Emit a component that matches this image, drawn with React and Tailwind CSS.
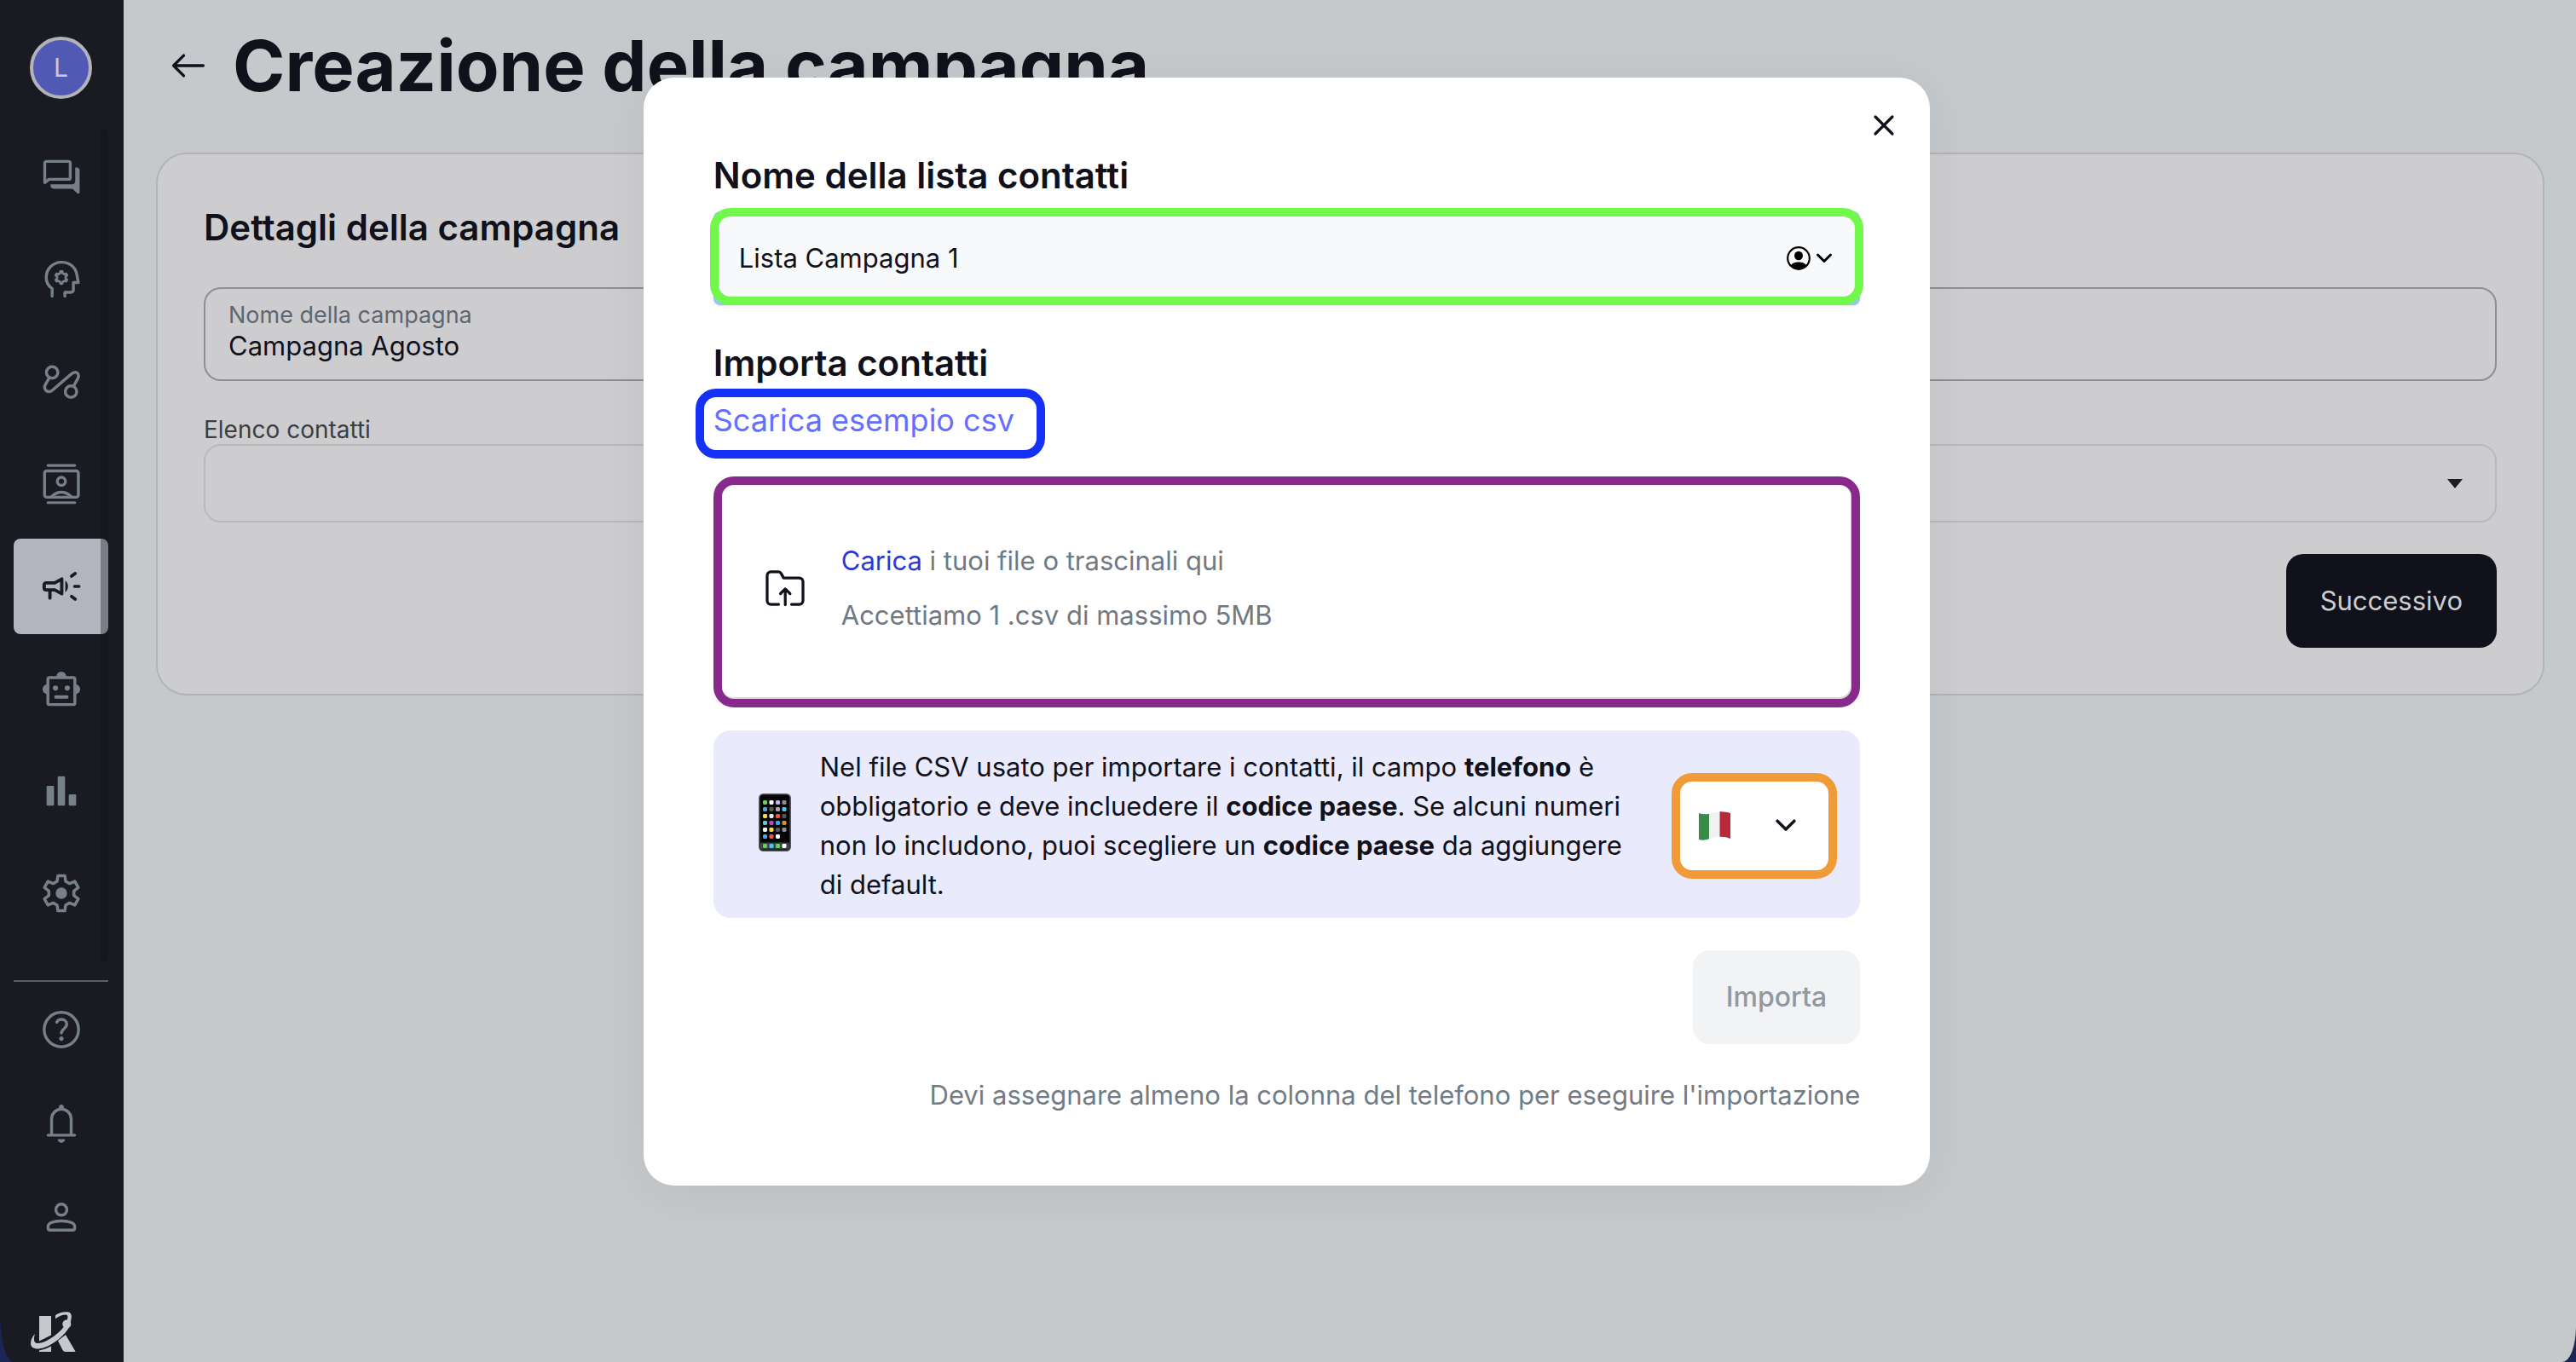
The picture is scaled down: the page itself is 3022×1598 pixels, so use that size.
import React from "react";

const Icon = ({ children, className = "size-[52px]" }) => (
  <svg viewBox="0 0 24 24" fill="none" stroke="currentColor" strokeWidth="1.6" strokeLinecap="round" strokeLinejoin="round" className={className} aria-hidden="true">
    {children}
  </svg>
);

const gearPoints = (cx, cy, outer, inner, halfOuter, halfInner) =>
  Array.from({ length: 6 }, (_, k) => {
    const a = (k * Math.PI) / 3;
    return [[-halfInner, -inner], [-halfOuter, -outer], [halfOuter, -outer], [halfInner, -inner]]
      .map(([x, y]) => `${(cx + x * Math.cos(a) - y * Math.sin(a)).toFixed(2)},${(cy + x * Math.sin(a) + y * Math.cos(a)).toFixed(2)}`)
      .join(" ");
  }).join(" ");

const mainNav = [
  { name: "Conversazioni", icon: (
    <>
      <path d="M3 14.9V4.3a.9.9 0 0 1 .9-.9h12a.9.9 0 0 1 .9.9v7.9a.9.9 0 0 1-.9.9H5.3z" />
      <path stroke="none" fill="currentColor" d="M6.2 15.8h11.5c1.2 0 1.8-.6 1.8-1.8V6.7h.8c.9 0 1.6.7 1.6 1.6v11.8c0 .7-.8 1-1.3.5l-2.6-2.4H8c-1.3 0-2.2-1-1.8-2.4z" />
    </>
  ) },
  { name: "Intelligenza artificiale", icon: (
    <>
      <path d="M7 21v-4.1C4.7 15.3 3.8 13 3.8 10.8c0-4.6 3.7-8.2 8.200-8.200 4.300 0 7.500 2.500 8.300 6.400l.9 4.600h-2.700v4a1.300 1.300 0 0 1-1.300 1.300h-3.300V21" />
      <polygon strokeWidth="1.3" points={gearPoints(12, 10.9, 3.3, 2.3, 0.5, 0.7)} />
    </>
  ) },
  { name: "Flussi", icon: (
    <>
      <circle cx="7" cy="6.9" r="3.1" />
      <circle cx="17.2" cy="17.3" r="3.1" />
      <path d="M5.5 9.8 3.3 13.6c-1 1.7.2 3.7 2 3.7.7 0 1.3-.2 1.9-.8l10-8.600c.8-.7 1.500-1.100 2.300-1.100 1.600 0 2.300 1.900 1.400 3.400l-2.200 4" />
    </>
  ) },
  { name: "Contatti", icon: (
    <>
      <path strokeWidth="1.4" d="M4.7 1.9h14.6M4.7 22h14.6" />
      <rect x="2.9" y="4.8" width="18.3" height="14.3" rx="1.2" />
      <circle cx="12" cy="10.5" r="2.2" />
      <path d="M6.8 18.7c1.6-1.5 3.4-2.3 5.2-2.3s3.6.8 5.2 2.3" />
    </>
  ) },
  { name: "Campagne", active: true, icon: (
    <>
      <path strokeWidth="1.8" d="M3.7 10.1h4.7l3.8-2.1v8l-3.8-2.1H3.7a1 1 0 0 1-1-1v-1.8a1 1 0 0 1 1-1zM5.8 14v4.3" />
      <path stroke="none" fill="currentColor" d="M14.1 8.9c.9.7 1.5 1.8 1.5 3.1s-.6 2.5-1.5 3.2z" />
      <path strokeWidth="1.7" d="M19.2 12h2.3M17.5 6.5l2-1.5M17.5 17.4l2 1.5" />
    </>
  ) },
  { name: "Bot", icon: (
    <>
      <rect x="4.7" y="6" width="14.6" height="14.6" rx=".9" />
      <path stroke="none" fill="currentColor" d="M9.3 5.5a2.7 2.7 0 0 1 5.4 0zM4.5 9.6a2.7 2.7 0 0 0 0 5.4zM19.5 9.6a2.7 2.7 0 0 1 0 5.4z" />
      <circle cx="8.8" cy="11.7" r="1.4" stroke="none" fill="currentColor" />
      <circle cx="15.2" cy="11.7" r="1.4" stroke="none" fill="currentColor" />
      <path strokeWidth="1.8" d="M9 16.5h6" />
    </>
  ) },
  { name: "Statistiche", icon: (
    <g stroke="none" fill="currentColor">
      <rect x="4" y="9.2" width="4" height="10.8" rx=".6" />
      <rect x="10" y="4" width="4" height="16" rx=".6" />
      <rect x="16" y="13.8" width="4" height="6.2" rx=".6" />
    </g>
  ) },
  { name: "Impostazioni", icon: (
    <>
      <polygon points={gearPoints(12, 12, 9.5, 6.5, 1.9, 2.3)} />
      <circle cx="12" cy="12" r="3.1" stroke="none" fill="currentColor" />
    </>
  ) },
];

const footNav = [
  { name: "Aiuto", icon: (
    <>
      <circle cx="12" cy="12" r="9.3" />
      <path d="M9.5 8c.5-.9 1.4-1.5 2.5-1.5 1.7 0 2.9 1.1 2.9 2.6 0 2.2-2.9 2.6-2.9 4.800" />
      <circle cx="12" cy="16.9" r="1.2" stroke="none" fill="currentColor" />
    </>
  ) },
  { name: "Notifiche", icon: (
    <>
      <path d="M4.8 18.4h14.4M6.7 18.4V9.6a5.3 5.3 0 0 1 10.6 0v8.8" />
      <path stroke="none" fill="currentColor" d="M10.7 3.2a1.3 1.3 0 0 1 2.6 0v1.2h-2.6zM10 20.500h4a2 2 0 0 1-4 0z" />
    </>
  ) },
  { name: "Profilo", icon: (
    <>
      <circle cx="12" cy="8" r="3" />
      <path d="M4.8 18v-.9c0-1 .5-1.6 1.4-2 1.9-.7 3.8-1 5.8-1s3.9.3 5.8 1c.9.4 1.4 1 1.4 2v.9c0 .6-.4 1-1 1H5.8c-.6 0-1-.4-1-1z" />
    </>
  ) },
];

const NavButton = ({ item }) => (
  <button
    type="button"
    aria-label={item.name}
    className={item.active
      ? "flex h-28 w-full items-center justify-center rounded-lg bg-[#b2b5be] text-[#191a22]"
      : "flex h-28 w-full items-center justify-center rounded-lg text-[#777f87]"}
  >
    <Icon>{item.icon}</Icon>
  </button>
);

const Logo = () => (
  <svg viewBox="0 0 54 48" className="h-12 w-[54px]" fill="#c5c9cc" aria-hidden="true">
    <path d="M10 5h14v22.500L10 34.500zM24 40.500V47H10v-1.500c5-1 10-2.800 14-5zM32 34l9-7 11.700 20H41c-2 0-3-1-4-3z" />
    <path d="M29 4.300C32 1.500 38 0 43 .2c4.500.3 5.500 4 4.500 8.500l-2 9C40 27 28 38 16 42 7 45 0 43.500 0 37c0-4 2-8 5-11-1.500 5-2 11 3 11 11 0 29-14 33-23 2.500-5.500 4-10.500 0-10.500-4 0-8 2-12 4.800z" />
    <circle cx="42.300" cy="14.500" r="5" />
  </svg>
);

const Sidebar = () => (
  <aside className="flex w-[145px] shrink-0 flex-col bg-[#191a22] pt-[43px] pr-[18px] pl-4">
    <div className="flex size-[73px] items-center justify-center self-center rounded-full border-4 border-[#b2b3ba] bg-[#505ab5] text-[30px] text-[#c9cbd6]">L</div>
    <nav className="relative mt-9 flex flex-col gap-2">
      {mainNav.map((item) => <NavButton key={item.name} item={item} />)}
      <div className="absolute top-0 right-0 -bottom-6 w-[9px] rounded-lg bg-[#14151c]/35" />
    </nav>
    <hr className="mt-[46px] border-t-2 border-[#5a6069]" />
    <nav className="flex flex-col">
      {footNav.map((item) => (
        <div key={item.name} className="h-[110px]"><NavButton item={item} /></div>
      ))}
    </nav>
    <div className="mt-[57px] ml-5"><Logo /></div>
  </aside>
);

const Page = () => (
  <main className="min-w-0 flex-1 bg-[#c5c9cc] pr-[37px] pl-[38px]">
    <header className="flex h-[179px] items-start gap-7 pt-[29px] pl-[14px]">
      <button type="button" aria-label="Indietro" className="flex h-24 w-12 items-center justify-center text-[#10111a]">
        <Icon className="size-11"><path strokeWidth="1.800" d="M21.500 12H3M9 5.500 2.500 12 9 18.500" /></Icon>
      </button>
      <h1 className="text-[83px] leading-[96px] font-bold whitespace-nowrap">Creazione della campagna</h1>
    </header>
    <section className="rounded-[36px] border-2 border-[#b0b4b9] bg-[#cdcdcf] px-[54px] pt-14 pb-[54px]">
      <h2 className="text-[42px] leading-[60px] font-semibold">Dettagli della campagna</h2>
      <label className="mt-10 flex h-[110px] flex-col justify-center rounded-[20px] border-2 border-[#8b9098] px-[27px] pb-2">
        <span className="text-[27px] leading-9 text-[#5f6670]">Nome della campagna</span>
        <input defaultValue="Campagna Agosto" className="w-full text-[31px] leading-9 outline-none" />
      </label>
      <label className="mt-10 block text-[28px] leading-[34px] text-[#3b3d42]" htmlFor="elenco">Elenco contatti</label>
      <div className="relative">
        <select id="elenco" className="block h-[92px] w-full appearance-none rounded-[20px] border-2 border-[#b7b9bc] px-7" defaultValue="">
          <option value=""></option>
        </select>
        <svg viewBox="0 0 18 11" className="pointer-events-none absolute top-[41px] right-10 h-[11px] w-[18px]" fill="#1b1c24" aria-hidden="true"><path d="M0 0h18L9 11z" /></svg>
      </div>
      <div className="mt-[37px] flex justify-end">
        <button type="button" className="h-[110px] rounded-[20px] bg-[#10111a] px-10 text-[31px] text-[#cdcdcf]">Successivo</button>
      </div>
    </section>
  </main>
);

const phoneRows = [
  ["#5fd35a", "#ffffff", "#c9b0ee", "#8d8d92"],
  ["#3fa9f5", "#5a5a5e", "#a9a9a9", "#4cc3f0"],
  ["#ffd83b", "#e9e9e9", "#f0554a", "#55555a"],
  ["#5bc8e8", "#d03fc0", "#3f9ff0", "#e08a24"],
  ["#f5f5f5", "#ffd83b", "#55555a", "#8d8d92"],
  ["#3fa9f5", "#f0554a", "#ffffff"],
];

const Phone = () => (
  <svg viewBox="0 0 38 68" className="mb-2 h-[68px] w-[38px] shrink-0" aria-hidden="true">
    <rect x=".8" y=".8" width="36.4" height="66.4" rx="4.5" fill="#050506" stroke="#55585c" strokeWidth="1.6" />
    <rect x="2" y="57.5" width="34" height="8" rx="2" fill="#3d4446" />
    {phoneRows.map((row, r) => row.map((c, i) => <rect key={`${r}-${i}`} x={5 + i * 7.5} y={8 + r * 8} width="5" height="5" rx="1.4" fill={c} />))}
    {["#5fd35a", "#4cc3f0", "#5fd35a", "#ffffff"].map((c, i) => <rect key={i} x={5 + i * 7.5} y="59" width="5" height="5" rx="1.4" fill={c} />)}
  </svg>
);

const Flag = () => (
  <svg viewBox="0 0 37 35" className="h-[35px] w-[37px]" aria-hidden="true">
    <path d="M0 2c4 1.500 8 1.700 12 .8v29.500c-4 1.500-8 1.800-12 .7z" fill="#388a48" />
    <path d="M12 2.800C16.500 1.800 20 .3 24.500.2v29.600c-4.500.2-8 1.700-12.500 2.500z" fill="#f1f1f2" />
    <path d="M24.500.2C29 0 33 .8 37 2v30c-4-1.500-8-2.400-12.500-2.200z" fill="#b72a37" />
  </svg>
);

const Modal = () => (
  <div role="dialog" aria-modal="true" aria-label="Importa contatti" className="relative w-1/2 rounded-[36px] bg-white px-[82px] pt-[85px] pb-[82px] shadow-[0_8px_60px_rgba(0,0,0,0.06)]">
    <button type="button" aria-label="Chiudi" className="absolute top-8 right-[30px] flex size-12 items-center justify-center">
      <Icon className="size-8"><path strokeWidth="2.4" d="M4.500 4.500l15 15M19.500 4.500l-15 15" /></Icon>
    </button>

    <label htmlFor="lista" className="block text-[42px] leading-[60px] font-semibold">Nome della lista contatti</label>
    <div className="relative mt-3 flex h-[110px] items-center gap-1 rounded-lg bg-[#93c5fd] px-[30px] shadow-sm">
      <div className="absolute -inset-x-1 -top-1 bottom-0 rounded-3xl border-10 border-[#72f84b] bg-[#f8f9fb]" />
      <input id="lista" defaultValue="Lista Campagna 1" className="relative min-w-0 flex-1 text-[31px] leading-10 outline-none" />
      <button type="button" aria-label="Scegli lista" className="relative flex items-center gap-1 text-black">
        <svg viewBox="0 0 28 28" className="size-7" aria-hidden="true">
          <circle cx="14" cy="14" r="12.8" fill="none" stroke="currentColor" strokeWidth="2.2" />
          <ellipse cx="14" cy="11" rx="5" ry="5.3" fill="currentColor" />
          <path d="M5 22.500c1-2.700 5-4 9-4s8 1.300 9 4c-2.300 2.900-5.500 4.500-9 4.500s-6.700-1.600-9-4.500z" fill="currentColor" />
        </svg>
        <Icon className="size-6"><path strokeWidth="3" d="M4.500 8l7.500 7.500L19.500 8" /></Icon>
      </button>
    </div>

    <h3 className="mt-[38px] text-[42px] leading-[60px] font-semibold">Importa contatti</h3>
    <a href="#csv" className="-ml-[21px] block w-fit rounded-3xl border-10 border-[#1431f8] pr-[26px] pb-2 pl-[11px] text-[36px] leading-[54px] text-[#656fff]">Scarica esempio csv</a>

    <div className="mt-[21px] flex h-[271px] items-center gap-10 rounded-3xl border-10 border-[#882a8c] px-12 pb-[10px] text-[31px] leading-[64px] text-[#707982] shadow-[inset_-1px_-2px_0_#d5d7da]">
      <Icon className="size-[52px] text-[#10111a]"><path strokeWidth="1.5" d="M8.500 20.800H4.300A2 2 0 0 1 2.300 18.800V5.200a2 2 0 0 1 2-2h4.200a1.500 1.500 0 0 1 1.300.8l1.400 2.500h8.500a2 2 0 0 1 2 2v10.300a2 2 0 0 1-2 2h-4.200M12.100 21v-8.600M9.500 15l2.600-2.600 2.600 2.600" /></Icon>
      <div>
        <p><button type="button" className="text-[#2b37d9]">Carica</button> i tuoi file o trascinali qui</p>
        <p>Accettiamo 1 .csv di massimo 5MB</p>
      </div>
    </div>

    <div className="mt-[27px] flex items-center rounded-[20px] bg-[#e9eafb] pt-5 pr-[27px] pb-4 pl-[53px]">
      <Phone />
      <p className="ml-[34px] min-w-0 flex-1 text-[31px] leading-[46px]">
        Nel file CSV usato per importare i contatti, il campo <b>telefono</b> è<br />
        obbligatorio e deve incluedere il <b>codice paese</b>. Se alcuni numeri<br />
        non lo includono, puoi scegliere un <b>codice paese</b> da aggiungere<br />
        di default.
      </p>
      <button type="button" aria-label="Prefisso Italia" className="flex h-[124px] w-[194px] shrink-0 items-center justify-between rounded-3xl border-10 border-[#f19a38] bg-white pr-9 pl-[22px]">
        <Flag />
        <Icon className="size-7"><path strokeWidth="3" d="M3.500 7l8.500 8.500L20.500 7" /></Icon>
      </button>
    </div>

    <div className="mt-[38px] flex justify-end">
      <button type="button" disabled className="h-[110px] rounded-[20px] bg-[#f1f3f5] px-[39px] text-[32px] font-medium text-[#92989f]">Importa</button>
    </div>
    <p className="mt-9 text-right text-[31px] leading-[48px] text-[#737b84]">Devi assegnare almeno la colonna del telefono per eseguire l'importazione</p>
  </div>
);

export default function App() {
  return (
    <div className="min-h-screen bg-[#1c2655] font-[Inter,sans-serif] text-[#10111a]">
      <div className="relative flex min-h-screen overflow-hidden [border-bottom-left-radius:16px_58px] [border-bottom-right-radius:16px_42px]">
        <Sidebar />
        <Page />
        <div className="absolute inset-0 flex items-start justify-center pt-[91px] pr-[3px]">
          <Modal />
        </div>
      </div>
    </div>
  );
}
